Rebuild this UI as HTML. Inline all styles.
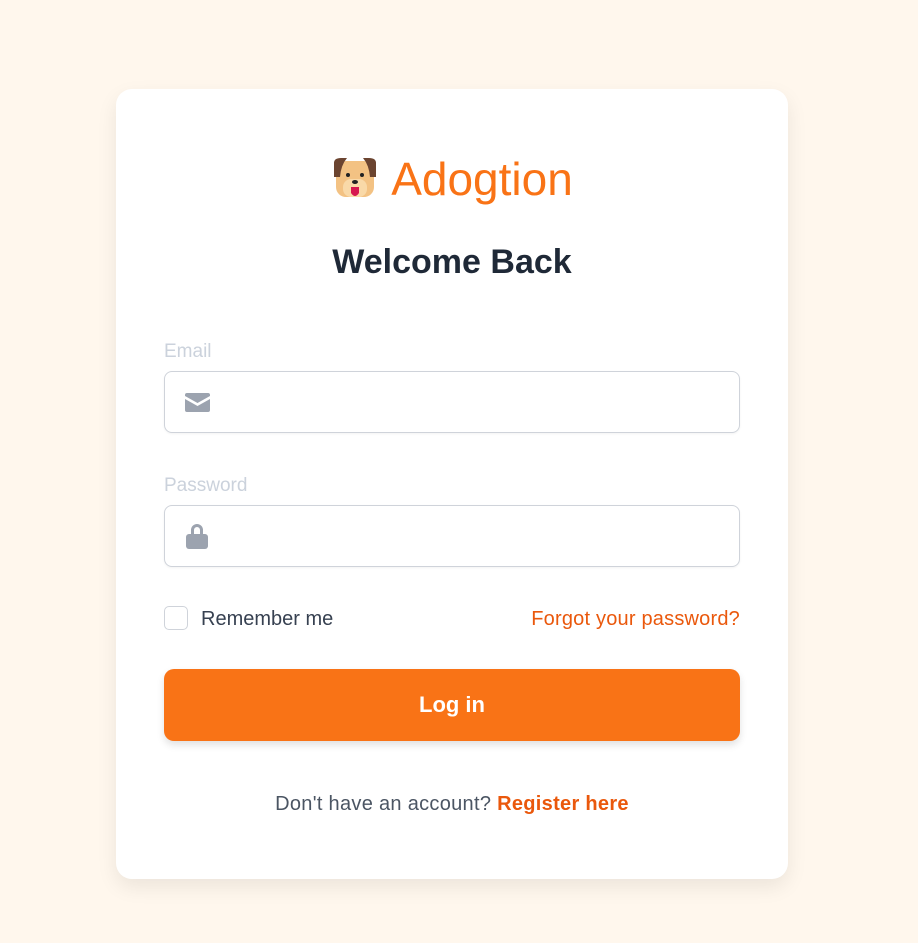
<!DOCTYPE html>
<html><head><style>
body{margin:0;background:#fff7ed;font-family:"Liberation Sans",sans-serif;width:918px;height:943px;position:relative;overflow:hidden}
.card{position:absolute;left:116px;top:89px;width:672px;height:790px;background:#fff;border-radius:16px;box-shadow:0 8px 20px rgba(0,0,0,0.08)}
.abs{position:absolute}
.logo{left:0;right:0;top:63px;text-align:center;font-size:46px;color:#f97316;font-weight:500}
.h{left:0;right:0;top:154px;text-align:center;font-size:34px;color:#1f2937;font-weight:600}
.lab{left:48px;font-size:19px;color:#cbd2dc}
.inp{left:48px;width:574px;height:60px;border:1px solid #cfd3da;border-radius:8px;box-shadow:0 1px 2px rgba(0,0,0,0.05)}
.btn{left:48px;top:580px;width:576px;height:72px;background:#f97316;border-radius:10px;color:#fff;font-size:22px;font-weight:bold;text-align:center;line-height:72px;box-shadow:0 4px 8px rgba(0,0,0,0.12)}
</style></head><body>
<div class="card">
<div class="abs logo"><svg width="48" height="44" viewBox="0 0 48 44" style="vertical-align:-6px;margin-right:12px"><rect x="5" y="4" width="38" height="36" rx="10" fill="#f3c283"/><path d="M3 6 Q3 1 10 1 L16 1 Q10 8 9 20 L3 20 Z" fill="#6b4430"/><path d="M45 6 Q45 1 38 1 L32 1 Q38 8 39 20 L45 20 Z" fill="#6b4430"/><rect x="12" y="22" width="24" height="18" rx="8" fill="#f9d9a8"/><circle cx="17" cy="18" r="2" fill="#222"/><circle cx="31" cy="18" r="2" fill="#222"/><ellipse cx="24" cy="25" rx="3" ry="2" fill="#222"/><path d="M20 30 L28 30 L28 36 Q24 42 20 36Z" fill="#d6174f"/></svg>Adogtion</div>
<div class="abs h">Welcome Back</div>
<div class="abs lab" style="top:252px">Email</div>
<div class="abs inp" style="top:282px"><svg class="abs" style="left:20px;top:21px" width="25" height="19" viewBox="0 0 25 19"><path d="M2 0h21a2 2 0 0 1 2 2v1l-12.5 7L0 3V2a2 2 0 0 1 2-2z M0 6l12.5 7L25 6v11a2 2 0 0 1-2 2H2a2 2 0 0 1-2-2z" fill="#9ca3af"/></svg></div>
<div class="abs lab" style="top:386px">Password</div>
<div class="abs inp" style="top:416px"><svg class="abs" style="left:21px;top:17px" width="22" height="26" viewBox="0 0 22 26"><path d="M5 11V7a6 6 0 0 1 12 0v4h-3V7a3 3 0 0 0-6 0v4z" fill="#9ca3af"/><rect x="0" y="11" width="22" height="15" rx="3" fill="#9ca3af"/></svg></div>
<div class="abs" style="left:48px;top:517px;width:24px;height:24px;border:1px solid #cfd3da;border-radius:5px;box-sizing:border-box"></div>
<div class="abs" style="left:85px;top:519px;font-size:20px;color:#374151">Remember me</div>
<div class="abs" style="right:48px;top:519px;font-size:20px;color:#ea580c;letter-spacing:0.2px">Forgot your password?</div>
<div class="abs btn">Log in</div>
<div class="abs" style="left:0;right:0;top:704px;text-align:center;font-size:20px;color:#4b5563;letter-spacing:0.3px">Don't have an account? <b style="color:#ea580c">Register here</b></div>
</div>
</body></html>
